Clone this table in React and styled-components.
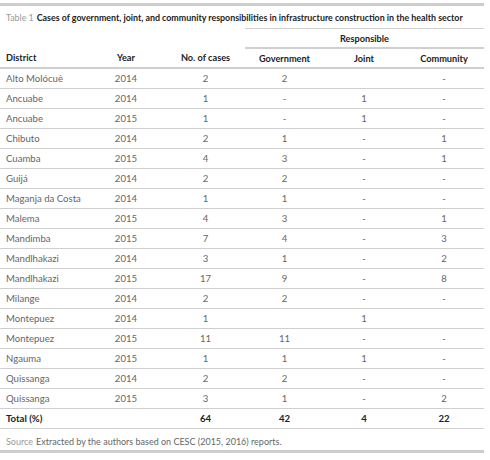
import React from 'react'
import styled, { createGlobalStyle } from 'styled-components'

const GlobalStyle = createGlobalStyle`
  body {
    margin: 0;
    background: #ffffff;
    font-family: Lato, "Open Sans", sans-serif;
  }
`

const Figure = styled.div`
  width: 484px;
  padding-top: 3px;
`

const Rule = styled.div`
  height: 3px;
  background: #cdcdcd;
`

const Caption = styled.div`
  font-size: 8.85px;
  line-height: 10px;
  padding: 7px 0 0 6px;
  height: 15px;
  color: #222;
  font-weight: 700;
  white-space: nowrap;
`

const Label = styled.span`
  color: #9a9a9a;
  font-weight: 400;
  margin-right: 3px;
`

const Table = styled.table`
  width: 484px;
  border-collapse: collapse;
  table-layout: fixed;
  font-size: 9.6px;
`

const Cell = styled.td`
  height: 19px;
  padding: 0;
  color: #666;
  text-align: ${p => (p.$left ? 'left' : 'center')};
  padding-left: ${p => (p.$left ? '6px' : '0')};
  border-bottom: 1px solid #cfcfcf;
  font-weight: ${p => (p.$bold ? 700 : 400)};
  ${p => p.$bold && 'color: #222;'}
`

const HeadCell = styled.th`
  height: 18px;
  padding: 0;
  font-size: 9.2px;
  color: #222;
  font-weight: 700;
  text-align: ${p => (p.$left ? 'left' : 'center')};
  padding-left: ${p => (p.$left ? '6px' : '0')};
  border-bottom: ${p => (p.$noline ? 'none' : '2px solid #cfcfcf')};
  border-top: ${p => (p.$top ? '1px solid #cfcfcf' : 'none')};
`

const Source = styled.div`
  font-size: 9px;
  line-height: 10px;
  color: #666;
  padding: 8px 0 0 6px;
  height: 13px;
`

const SourceLabel = styled.span`
  color: #9a9a9a;
  margin-right: 3px;
`

const rows = [
  ['Alto Molócuè', '2014', '2', '2', '', '-'],
  ['Ancuabe', '2014', '1', '-', '1', '-'],
  ['Ancuabe', '2015', '1', '-', '1', '-'],
  ['Chibuto', '2014', '2', '1', '-', '1'],
  ['Cuamba', '2015', '4', '3', '-', '1'],
  ['Guijá', '2014', '2', '2', '-', '-'],
  ['Maganja da Costa', '2014', '1', '1', '-', '-'],
  ['Malema', '2015', '4', '3', '-', '1'],
  ['Mandimba', '2015', '7', '4', '-', '3'],
  ['Mandlhakazi', '2014', '3', '1', '-', '2'],
  ['Mandlhakazi', '2015', '17', '9', '-', '8'],
  ['Milange', '2014', '2', '2', '-', '-'],
  ['Montepuez', '2014', '1', '', '1', ''],
  ['Montepuez', '2015', '11', '11', '-', '-'],
  ['Ngauma', '2015', '1', '1', '1', '-'],
  ['Quissanga', '2014', '2', '2', '-', '-'],
  ['Quissanga', '2015', '3', '1', '-', '2'],
]

export default function App() {
  return (
    <>
      <GlobalStyle />
      <Figure>
        <Rule />
        <Caption>
          <Label>Table 1</Label>
          Cases of government, joint, and community responsibilities in infrastructure construction in the health sector
        </Caption>
        <Table>
          <colgroup>
            <col style={{ width: 86 }} />
            <col style={{ width: 80 }} />
            <col style={{ width: 79 }} />
            <col style={{ width: 79 }} />
            <col style={{ width: 80 }} />
            <col style={{ width: 80 }} />
          </colgroup>
          <thead>
            <tr>
              <HeadCell colSpan={3} $noline />
              <HeadCell colSpan={3} $top>Responsible</HeadCell>
            </tr>
            <tr>
              <HeadCell $left>District</HeadCell>
              <HeadCell>Year</HeadCell>
              <HeadCell>No. of cases</HeadCell>
              <HeadCell>Government</HeadCell>
              <HeadCell>Joint</HeadCell>
              <HeadCell>Community</HeadCell>
            </tr>
          </thead>
          <tbody>
            {rows.map((r, i) => (
              <tr key={i}>
                {r.map((v, j) => (
                  <Cell key={j} $left={j === 0}>{v}</Cell>
                ))}
              </tr>
            ))}
            <tr>
              <Cell $left $bold>Total (%)</Cell>
              <Cell />
              <Cell $bold>64</Cell>
              <Cell $bold>42</Cell>
              <Cell $bold>4</Cell>
              <Cell $bold>22</Cell>
            </tr>
          </tbody>
        </Table>
        <Source>
          <SourceLabel>Source</SourceLabel>
          Extracted by the authors based on CESC (2015, 2016) reports.
        </Source>
        <Rule />
      </Figure>
    </>
  )
}
